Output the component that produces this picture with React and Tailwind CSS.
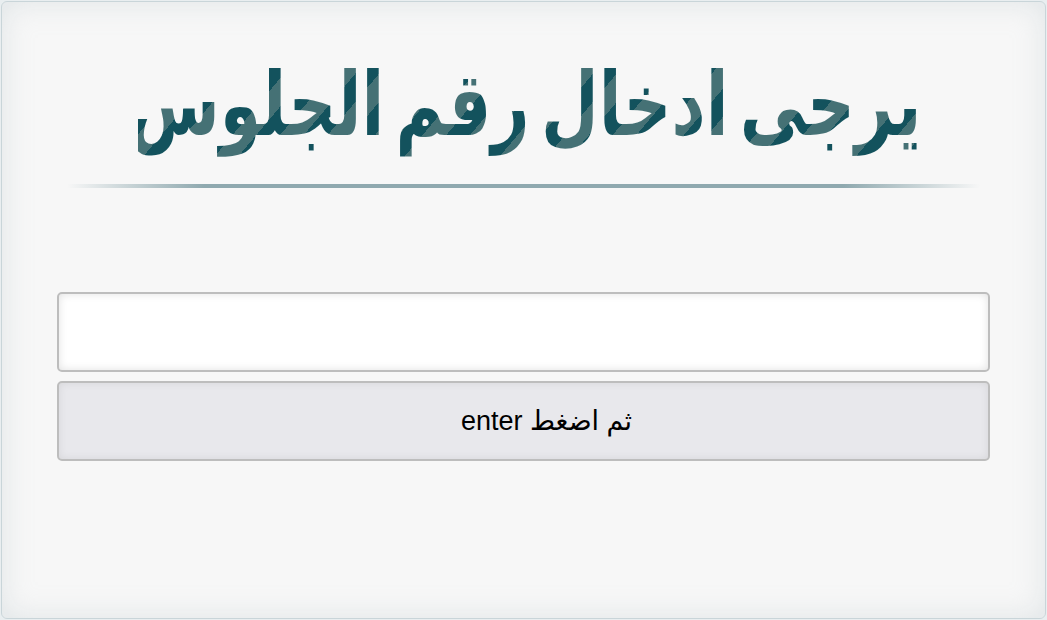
const App = () => {
  return (
    <div className="h-[620px] w-[1047px] bg-[#e9eef0] p-px">
      <div className="flex h-full w-full flex-col rounded-[6px] border border-[#c9d5d9] bg-[#f7f7f7] px-[55px] shadow-[inset_0_0_30px_rgba(180,195,200,0.35)]">
        <h1
          dir="rtl"
          className="mt-[48px] translate-x-[6px] scale-x-[0.84] whitespace-nowrap bg-[repeating-linear-gradient(135deg,#13525d_0px,#13525d_20px,#457175_20px,#457175_40px)] bg-clip-text text-center text-[88px] leading-[110px] font-bold text-transparent [word-spacing:-14px]"
          style={{ fontFamily: '"DejaVu Sans Condensed", "DejaVu Sans", sans-serif', WebkitBackgroundClip: "text" }}
        >
          يرجى ادخال رقم الجلوس
        </h1>
        <div className="mx-[10px] mt-[24px] h-[4px] bg-[linear-gradient(to_right,rgba(143,169,175,0),#8fa9af_15%,#8fa9af_85%,rgba(143,169,175,0))]" />
        <input
          type="text"
          className="mt-[104px] h-[80px] w-full rounded-[5px] border-2 border-[#bdbdbd] bg-white px-3 text-xl outline-none shadow-[inset_0_0_8px_rgba(0,0,0,0.12)]"
        />
        <button
          type="button"
          className="mt-[9px] h-[80px] w-full rounded-[5px] border-2 border-[#bdbdbd] bg-[#e8e8ec] pl-[46px] text-[27px] text-black shadow-[inset_0_0_8px_rgba(0,0,0,0.08)]"
          style={{ fontFamily: '"Liberation Sans", "DejaVu Sans", sans-serif' }}
        >
          <span dir="rtl">ثم اضغط enter</span>
        </button>
      </div>
    </div>
  );
};

export default App;
